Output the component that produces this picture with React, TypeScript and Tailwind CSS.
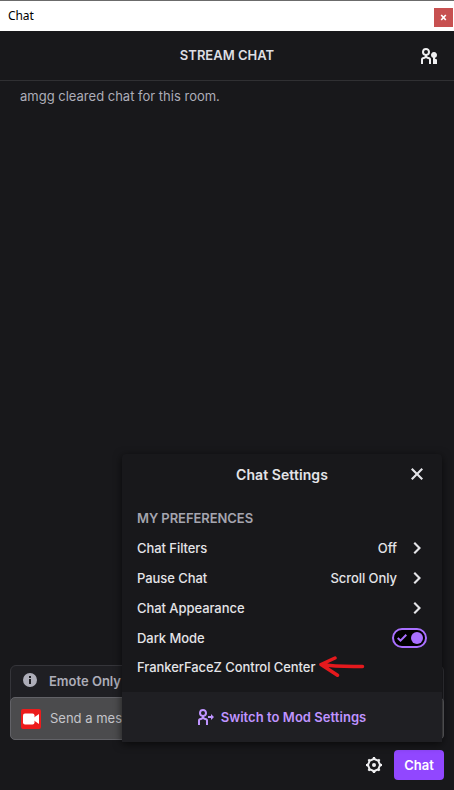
import type { ReactNode } from "react";

const PERSON =
  "M7 2a4 4 0 0 0-1.015 7.87c-.098.64-.651 1.13-1.318 1.13A2.667 2.667 0 0 0 2 13.667V18h2v-4.333c0-.368.298-.667.667-.667A3.32 3.32 0 0 0 7 12.047 3.32 3.32 0 0 0 9.333 13c.369 0 .667.299.667.667V18h2v-4.333A2.667 2.667 0 0 0 9.333 11c-.667 0-1.22-.49-1.318-1.13A4.002 4.002 0 0 0 7 2zM5 6a2 2 0 1 0 4 0 2 2 0 0 0-4 0z";

function Icon({ children }: { children: ReactNode }) {
  return (
    <svg viewBox="0 0 20 20" className="size-5 shrink-0" fill="currentColor" fillRule="evenodd" clipRule="evenodd">
      {children}
    </svg>
  );
}

function CommunityIcon() {
  return (
    <Icon>
      <path d={PERSON} />
      <path d="M14 11.83V18h4v-3.75c0-.69-.56-1.25-1.25-1.25a.75.75 0 0 1-.75-.75v-.42a3.001 3.001 0 1 0-2 0z" />
    </Icon>
  );
}

function SwitchUserIcon() {
  return (
    <Icon>
      <path d={PERSON} />
      <path d="M12 9h3V7l3 3-3 3v-2h-3z" />
    </Icon>
  );
}

function GearIcon() {
  return (
    <Icon>
      <path d="M10 8a2 2 0 1 0 0 4 2 2 0 0 0 0-4z" />
      <path d="M9 2h2a2.01 2.01 0 0 0 1.235 1.855l.53.22a2.01 2.01 0 0 0 2.185-.439l1.414 1.414a2.01 2.01 0 0 0-.439 2.185l.22.53A2.01 2.01 0 0 0 18 9v2a2.01 2.01 0 0 0-1.855 1.235l-.22.53a2.01 2.01 0 0 0 .44 2.185l-1.415 1.414a2.01 2.01 0 0 0-2.184-.439l-.531.22A2.01 2.01 0 0 0 11 18H9a2.01 2.01 0 0 0-1.235-1.854l-.53-.22a2.009 2.009 0 0 0-2.185.438L3.636 14.95a2.009 2.009 0 0 0 .438-2.184l-.22-.531A2.01 2.01 0 0 0 2 11V9c.809 0 1.545-.487 1.854-1.235l.22-.53a2.009 2.009 0 0 0-.438-2.185L5.05 3.636a2.01 2.01 0 0 0 2.185.438l.53-.22A2.01 2.01 0 0 0 9 2zm-4 8 1.464 3.536L10 15l3.535-1.464L15 10l-1.465-3.536L10 5 6.464 6.464 5 10z" />
    </Icon>
  );
}

function ChevronIcon() {
  return (
    <Icon>
      <path d="M6.5 5.5 8 4l6 6-6 6-1.500-1.500L11 10 6.500 5.500z" />
    </Icon>
  );
}

function CloseIcon() {
  return (
    <Icon>
      <path d="M8.500 10 4 5.500 5.500 4 10 8.500 14.500 4 16 5.500 11.500 10l4.500 4.500-1.500 1.500-4.500-4.500L5.500 16 4 14.500 8.500 10z" />
    </Icon>
  );
}

function SettingRow({ label, value }: { label: string; value?: string }) {
  return (
    <div className="flex h-[30px] items-center">
      <span className="flex-1 pt-[2px]">{label}</span>
      {value && <span className="mr-[10px] pt-[2px]">{value}</span>}
      <span className="mr-[15px] flex">
        <ChevronIcon />
      </span>
    </div>
  );
}

function SettingsPopup() {
  return (
    <div className="absolute top-[454px] left-[122px] flex h-[288px] w-[320px] flex-col rounded-t-[4px] bg-[#18181b] text-[#e4e4e8] shadow-[0_2px_8px_rgba(0,0,0,0.65)]">
      <div className="flex h-[42px] items-center pr-[15px] pl-[35px]">
        <span className="flex-1 pb-[2px] text-center text-[14px] font-semibold tracking-[0.08px]">Chat Settings</span>
        <span className="-mt-[2px] flex">
          <CloseIcon />
        </span>
      </div>
      <div className="flex flex-1 flex-col pl-[15px] text-[13px] font-medium tracking-[-0.06px]">
        <span className="mt-[11px] flex h-[26px] items-center pb-[3px] font-semibold text-[#a5a5af]">MY PREFERENCES</span>
        <SettingRow label="Chat Filters" value="Off" />
        <SettingRow label="Pause Chat" value="Scroll Only" />
        <SettingRow label="Chat Appearance" />
        <div className="flex h-[30px] items-center justify-between pr-[15px]">
          <span className="pt-[2px]">Dark Mode</span>
          <span className="flex h-5 w-[35px] items-center justify-between rounded-full border-2 border-[#a970ff] bg-black pr-[2px] pl-[3px]">
            <svg viewBox="0 0 10 8" className="h-2 w-[10px]" fill="none" stroke="#a970ff" strokeWidth="2">
              <path d="M.7 4 3.500 6.600 9.300.8" />
            </svg>
            <span className="size-3 rounded-full bg-[#a970ff]" />
          </span>
        </div>
        <div className="flex h-7 items-center gap-[3px]">
          <span className="pt-[2px]">FrankerFaceZ Control Center</span>
          <svg viewBox="0 0 47 22" className="-mt-[3px] h-[22px] w-[47px]" fill="none" stroke="#e5191d" strokeWidth="3.500" strokeLinecap="round" strokeLinejoin="round">
            <path d="M44.500 11.500C31 11.300 19 12 3 9.500M17 3 3 9.500 19.500 20.200" />
          </svg>
        </div>
      </div>
      <div className="flex h-[50px] items-center justify-center gap-[5px] bg-[#1f1f23] pr-[2px] text-[13px] font-semibold tracking-[0.05px] text-[#bf94ff]">
        <SwitchUserIcon />
        <span className="pt-[2px]">Switch to Mod Settings</span>
      </div>
    </div>
  );
}

export default function App() {
  return (
    <div className="relative flex h-[790px] w-[454px] flex-col overflow-hidden bg-[#18181b] font-[Inter,sans-serif] text-[13px] text-[#efeff1]">
      <div className="flex h-[31px] shrink-0 items-center justify-between border-t border-[#6b6b6b] bg-white pr-px pl-2">
        <span className="font-['Noto_Sans',sans-serif] text-[12px] tracking-[-0.1px] text-black">Chat</span>
        <span className="mt-[3px] flex h-[19px] w-[19px] items-center justify-center bg-[#c75050]">
          <svg viewBox="0 0 5 5" className="size-[5px] overflow-visible" stroke="white" strokeWidth="1.700">
            <path d="M.2 0 4.800 5M4.800 0 .2 5" />
          </svg>
        </span>
      </div>
      <header className="flex h-[50px] shrink-0 items-center border-b border-[#303033] pr-[15px] pl-[35px]">
        <span className="flex-1 text-center font-semibold text-[#dedee3]">STREAM CHAT</span>
        <CommunityIcon />
      </header>
      <main className="flex-1 px-5 pt-[5px] leading-5 text-[#adadb8]">amgg cleared chat for this room.</main>
      <section className="mx-[10px] shrink-0 rounded-[6px] border border-[#35353a] bg-[#1f1f23]">
        <div className="flex h-[31px] items-center gap-[9px] pl-[9px] font-semibold text-[#adadb8]">
          <span className="flex pb-[3px]">
            <Icon>
              <path d="M10 3a7 7 0 1 0 0 14 7 7 0 0 0 0-14zM9 6h2v2H9V6zm0 3h2v5H9V9z" />
            </Icon>
          </span>
          <span>Emote Only</span>
        </div>
        <div className="-mx-px -mb-px flex h-[43px] items-center gap-[9px] rounded-[5px] border border-[#626267] bg-[#4b4b4d] pl-[10px] text-[#c5c5ca]">
          <span className="flex size-5 items-center justify-center rounded-[2px] bg-[#ec1c1c] text-white">
            <svg viewBox="0 0 16 12" className="h-3 w-4" fill="currentColor">
              <rect y=".5" width="11.500" height="11" rx="2" />
              <path d="M11 4.500 16 1v10l-5-3.500z" />
            </svg>
          </span>
          <span>Send a message</span>
        </div>
      </section>
      <footer className="flex h-[50px] shrink-0 items-center justify-end gap-[10px] pr-[10px]">
        <GearIcon />
        <button className="h-[30px] w-[50px] rounded-[4px] bg-[#9147ff] pt-[2px] font-semibold text-white">Chat</button>
      </footer>
      <SettingsPopup />
    </div>
  );
}
